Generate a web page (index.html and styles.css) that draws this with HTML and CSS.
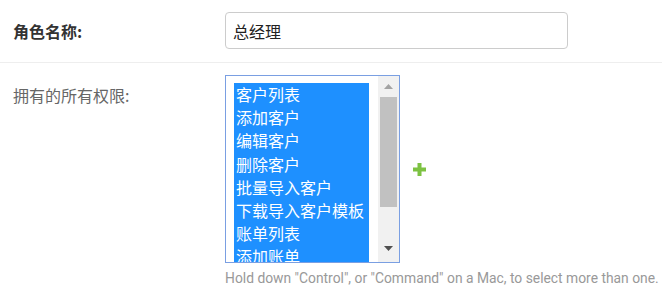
FILE: index.html
```html
<!DOCTYPE html>
<html lang="zh-CN">
<head>
<meta charset="utf-8">
<title>角色</title>
<link rel="stylesheet" href="styles.css">
</head>
<body>
<div class="form">
  <div class="row row-name">
    <label class="label label-strong" for="name">角色名称:</label>
    <div class="field">
      <input id="name" class="text-input" type="text" value="总经理">
    </div>
  </div>
  <div class="row row-perms">
    <label class="label label-muted">拥有的所有权限:</label>
    <div class="field">
      <div class="select-line">
        <div class="listbox" role="listbox" aria-multiselectable="true">
          <div class="options">
            <div class="option" role="option" aria-selected="true">客户列表</div>
            <div class="option" role="option" aria-selected="true">添加客户</div>
            <div class="option" role="option" aria-selected="true">编辑客户</div>
            <div class="option" role="option" aria-selected="true">删除客户</div>
            <div class="option" role="option" aria-selected="true">批量导入客户</div>
            <div class="option" role="option" aria-selected="true">下载导入客户模板</div>
            <div class="option" role="option" aria-selected="true">账单列表</div>
            <div class="option" role="option" aria-selected="true">添加账单</div>
          </div>
          <div class="scrollbar">
            <div class="sb-btn sb-up">
              <svg width="9" height="5" viewBox="0 0 9 5"><polygon points="0,5 9,5 4.5,0" fill="#a3a3a3"/></svg>
            </div>
            <div class="sb-thumb"></div>
            <div class="sb-space"></div>
            <div class="sb-btn sb-down">
              <svg width="9" height="5" viewBox="0 0 9 5"><polygon points="0,0 9,0 4.5,5" fill="#505050"/></svg>
            </div>
          </div>
        </div>
        <a class="add-link" href="#" aria-label="add">
          <svg width="13" height="13" viewBox="0 0 13 13"><rect x="4.5" y="0" width="4" height="13" fill="#7dc242"/><rect x="0" y="4.5" width="13" height="4" fill="#7dc242"/></svg>
        </a>
      </div>
      <div class="help">Hold down "Control", or "Command" on a Mac, to select more than one.</div>
    </div>
  </div>
</div>
</body>
</html>
```

FILE: styles.css
```css
html, body {
  margin: 0;
  padding: 0;
  background: #fff;
}

body {
  font-family: Roboto, "Noto Sans CJK SC", sans-serif;
  color: #333;
}

.row {
  display: grid;
  grid-template-columns: 212px 1fr;
  padding-left: 13px;
}

.row-name {
  padding-top: 12px;
  padding-bottom: 13px;
  border-bottom: 1px solid #eeeeee;
  align-items: center;
}

.row-perms {
  padding-top: 12px;
  align-items: start;
}

.label {
  font-family: "Noto Sans CJK SC", sans-serif;
  font-size: 16px;
  line-height: 20px;
}

.label-strong {
  font-weight: bold;
  color: #333;
}

.label-muted {
  color: #666;
  padding-top: 10px;
}

.text-input {
  box-sizing: border-box;
  width: 343px;
  height: 37px;
  margin: 0;
  border: 1px solid #cccccc;
  border-radius: 4px;
  padding: 0 7px;
  font-family: "Noto Sans CJK SC", sans-serif;
  font-size: 16px;
  color: #222;
  background: #fff;
  outline: none;
}

.select-line {
  display: flex;
  align-items: center;
}

.listbox {
  box-sizing: border-box;
  width: 175px;
  height: 188px;
  border: 1px solid #7a9fe2;
  display: flex;
  overflow: hidden;
  background: #fff;
}

.options {
  flex: 1;
  padding: 7px 10px 0 8px;
  overflow: hidden;
}

.option {
  width: 135px;
  box-sizing: border-box;
  padding: 0 2px;
  height: 23.2px;
  line-height: 23.2px;
  font-family: "Noto Sans CJK SC", sans-serif;
  font-size: 16px;
  color: #fff;
  background: #1e90ff;
  white-space: nowrap;
}

.scrollbar {
  width: 21px;
  background: #f1f1f1;
  display: flex;
  flex-direction: column;
}

.sb-btn {
  height: 21px;
  display: flex;
  align-items: center;
  justify-content: center;
}

.sb-down {
  padding-bottom: 3px;
}

.sb-thumb {
  height: 110px;
  margin: 0 2px;
  background: #c1c1c1;
}

.sb-space {
  flex: 1;
}

.add-link {
  display: flex;
  margin-left: 13px;
}

.help {
  margin-top: 6px;
  font-family: Roboto, sans-serif;
  font-size: 13.85px;
  line-height: 18px;
  color: #999;
  white-space: nowrap;
}
```
